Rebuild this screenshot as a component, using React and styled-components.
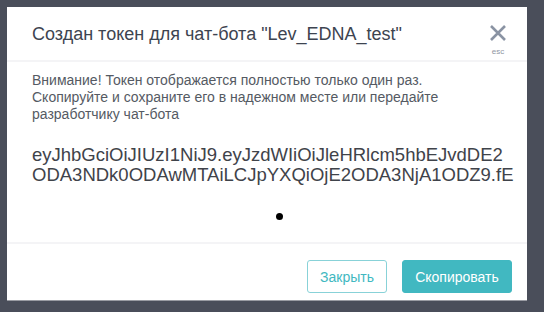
import React from "react";
import styled, { createGlobalStyle } from "styled-components";

const GlobalStyle = createGlobalStyle`
  html, body {
    margin: 0;
    padding: 0;
    background: #4a4e5a;
  }
  body {
    font-family: "Liberation Sans", Arial, sans-serif;
  }
`;

const Overlay = styled.div`
  width: 544px;
  height: 312px;
  padding: 7px 17px 0 7px;
  box-sizing: border-box;
  background: #4a4e5a;
`;

const Modal = styled.div`
  width: 520px;
  height: 293px;
  background: #fff;
  display: flex;
  flex-direction: column;
  box-shadow: 0 1px 0 #9a9ca3;
`;

const Header = styled.div`
  height: 53px;
  display: flex;
  align-items: flex-start;
  justify-content: space-between;
  padding: 0 20px 0 25px;
  border-bottom: 2px solid #f4f4f6;
`;

const Title = styled.h2`
  margin: 16px 0 0;
  font-size: 18px;
  font-weight: normal;
  color: #3d4450;
  line-height: 22px;
`;

const CloseButton = styled.button`
  margin-top: 17px;
  padding: 0;
  border: 0;
  background: none;
  display: flex;
  flex-direction: column;
  align-items: center;
  cursor: pointer;
  color: #8a93a3;
`;

const EscLabel = styled.span`
  font-size: 8px;
  margin-top: 5px;
  color: #8f96a3;
  font-family: "Liberation Sans", Arial, sans-serif;
`;

const Body = styled.div`
  height: 170px;
  padding: 10px 20px 0 25px;
  border-bottom: 2px solid #f4f4f6;
  display: flex;
  flex-direction: column;
`;

const Notice = styled.p`
  margin: 0;
  font-size: 14px;
  line-height: 17px;
  color: #555a63;
  white-space: nowrap;
`;

const Token = styled.p`
  margin: 22px 0 0;
  font-size: 18.5px;
  line-height: 20px;
  color: #3f434a;
  white-space: nowrap;
`;

const Dot = styled.span`
  align-self: flex-start;
  margin: 28px 0 0 244px;
  width: 7px;
  height: 7px;
  border-radius: 50%;
  background: #000;
`;

const Footer = styled.div`
  flex: 1;
  display: flex;
  justify-content: flex-end;
  align-items: flex-start;
  gap: 15px;
  padding: 16px 15px 0;
`;

const Button = styled.button`
  height: 33px;
  padding: 0;
  border-radius: 3px;
  font-family: "Liberation Sans", Arial, sans-serif;
  font-size: 14px;
  cursor: pointer;
  border: 1px solid ${(p) => (p.$primary ? "#41b8c1" : "#88d2d8")};
  background: ${(p) => (p.$primary ? "#41b8c1" : "#fff")};
  color: ${(p) => (p.$primary ? "#fff" : "#41b8c1")};
  width: ${(p) => (p.$primary ? "110px" : "80px")};
`;

export default function App() {
  return (
    <>
      <GlobalStyle />
      <Overlay>
        <Modal>
          <Header>
            <Title>Создан токен для чат-бота "Lev_EDNA_test"</Title>
            <CloseButton aria-label="Закрыть">
              <svg width="18" height="18" viewBox="0 0 18 18">
                <path d="M2 2 L16 16 M16 2 L2 16" stroke="#8a93a3" strokeWidth="2.6" />
              </svg>
              <EscLabel>esc</EscLabel>
            </CloseButton>
          </Header>
          <Body>
            <Notice>
              Внимание! Токен отображается полностью только один раз.
              <br />
              Скопируйте и сохраните его в надежном месте или передайте
              <br />
              разработчику чат-бота
            </Notice>
            <Token>
              eyJhbGciOiJIUzI1NiJ9.eyJzdWIiOiJleHRlcm5hbEJvdDE2
              <br />
              ODA3NDk0ODAwMTAiLCJpYXQiOjE2ODA3NjA1ODZ9.fE
            </Token>
            <Dot />
          </Body>
          <Footer>
            <Button>Закрыть</Button>
            <Button $primary>Скопировать</Button>
          </Footer>
        </Modal>
      </Overlay>
    </>
  );
}
